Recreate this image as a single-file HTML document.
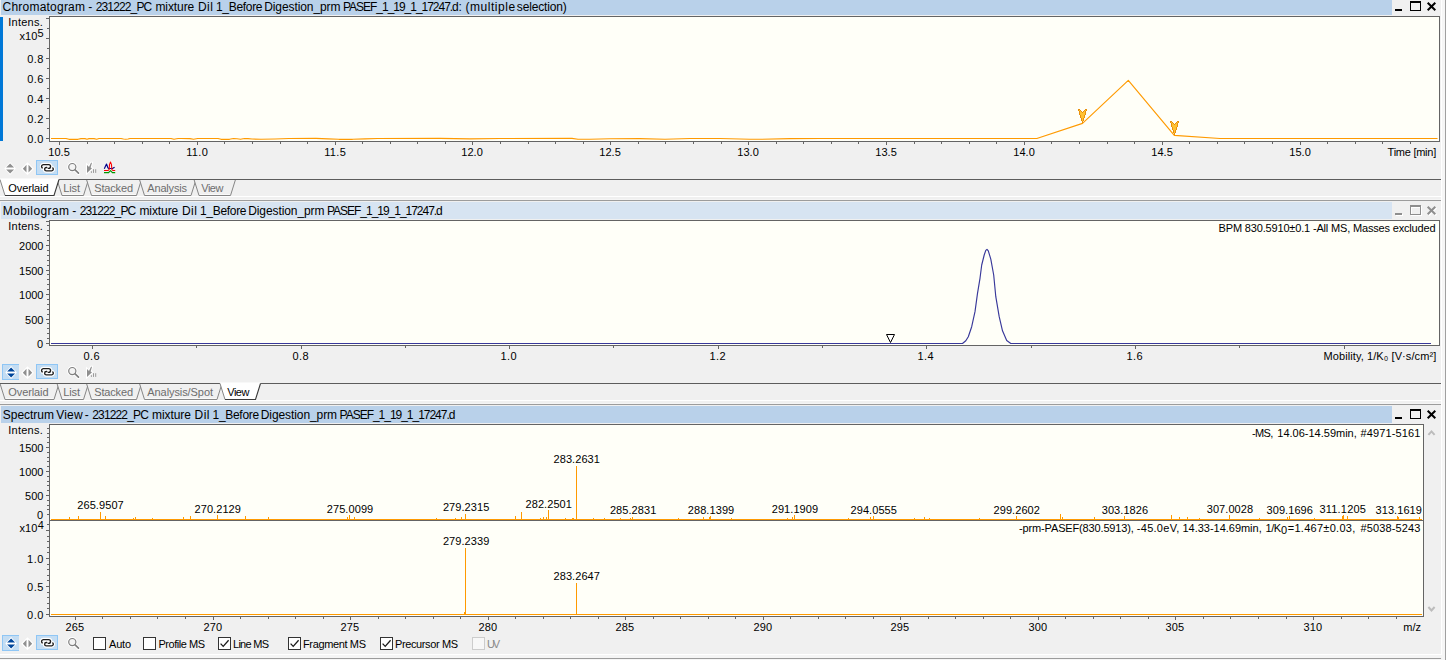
<!DOCTYPE html>
<html lang="en"><head><meta charset="utf-8"><title>Data Analysis</title>
<style>html,body{margin:0;padding:0;background:#f0f0f0;overflow:hidden}svg{display:block}text{white-space:pre}</style>
</head><body>
<svg width="1446" height="660" viewBox="0 0 1446 660" font-family="Liberation Sans, sans-serif" font-size="11" fill="#000">
<rect x="0" y="0" width="1446" height="660" fill="#f0f0f0"/>
<g shape-rendering="crispEdges">
<rect x="1441" y="0" width="1" height="655" fill="#ffffff"/>
<rect x="1442" y="0" width="3" height="660" fill="#f6f6f6"/>
<rect x="1445" y="0" width="1" height="660" fill="#a0a0a0"/>
</g>
<g shape-rendering="crispEdges">
<rect x="1" y="0" width="1391" height="15" fill="#b9d1ea"/>
</g>
<g shape-rendering="crispEdges">
<rect x="1395" y="9" width="7" height="2" fill="#000"/>
<rect x="1410" y="1" width="11" height="2" fill="#000"/>
<rect x="1410" y="1" width="1" height="10" fill="#000"/>
<rect x="1420" y="1" width="1" height="10" fill="#000"/>
<rect x="1410" y="10" width="11" height="1" fill="#000"/>
</g>
<path d="M1427.7 2.7 L1435.3 10.3 M1435.3 2.7 L1427.7 10.3" stroke="#000" stroke-width="2" fill="none"/>
<text y="11" font-size="12"><tspan x="2.6" textLength="82.4" lengthAdjust="spacing">Chromatogram</tspan> <tspan x="88.2" textLength="5.0" lengthAdjust="spacing">-</tspan> <tspan x="95.7" textLength="56.5" lengthAdjust="spacing">231222_PC</tspan> <tspan x="155.4" textLength="38.9" lengthAdjust="spacing">mixture</tspan> <tspan x="198.0" textLength="14.8" lengthAdjust="spacing">Dil</tspan> <tspan x="216.0" textLength="46.5" lengthAdjust="spacing">1_Before</tspan> <tspan x="264.2" textLength="76.3" lengthAdjust="spacing">Digestion_prm</tspan> <tspan x="343.0" textLength="115.8" lengthAdjust="spacing">PASEF_1_19_1_17247.d</tspan> <tspan x="458.5" textLength="3.3" lengthAdjust="spacing">:</tspan> <tspan x="465.4" textLength="49.7" lengthAdjust="spacing">(multiple</tspan> <tspan x="516.8" textLength="50.0" lengthAdjust="spacing">selection)</tspan></text>
<g shape-rendering="crispEdges">
<rect x="0" y="17" width="3" height="124" fill="#0078d7"/>
<rect x="49" y="16" width="1391" height="126" fill="#646464"/>
<rect x="50" y="17" width="1389" height="124" fill="#fffff8"/>
<rect x="46" y="138" width="3" height="1" fill="#646464"/>
<rect x="47" y="128" width="2" height="1" fill="#646464"/>
<rect x="46" y="118" width="3" height="1" fill="#646464"/>
<rect x="47" y="108" width="2" height="1" fill="#646464"/>
<rect x="46" y="98" width="3" height="1" fill="#646464"/>
<rect x="47" y="88" width="2" height="1" fill="#646464"/>
<rect x="46" y="78" width="3" height="1" fill="#646464"/>
<rect x="47" y="68" width="2" height="1" fill="#646464"/>
<rect x="46" y="58" width="3" height="1" fill="#646464"/>
<rect x="47" y="48" width="2" height="1" fill="#646464"/>
<rect x="46" y="38" width="3" height="1" fill="#646464"/>
<rect x="47" y="28" width="2" height="1" fill="#646464"/>
<rect x="46" y="18" width="3" height="1" fill="#646464"/>
<rect x="59" y="142" width="1" height="3" fill="#646464"/>
<rect x="87" y="142" width="1" height="2" fill="#646464"/>
<rect x="114" y="142" width="1" height="2" fill="#646464"/>
<rect x="142" y="142" width="1" height="2" fill="#646464"/>
<rect x="169" y="142" width="1" height="2" fill="#646464"/>
<rect x="197" y="142" width="1" height="3" fill="#646464"/>
<rect x="224" y="142" width="1" height="2" fill="#646464"/>
<rect x="252" y="142" width="1" height="2" fill="#646464"/>
<rect x="280" y="142" width="1" height="2" fill="#646464"/>
<rect x="307" y="142" width="1" height="2" fill="#646464"/>
<rect x="335" y="142" width="1" height="3" fill="#646464"/>
<rect x="362" y="142" width="1" height="2" fill="#646464"/>
<rect x="390" y="142" width="1" height="2" fill="#646464"/>
<rect x="417" y="142" width="1" height="2" fill="#646464"/>
<rect x="445" y="142" width="1" height="2" fill="#646464"/>
<rect x="472" y="142" width="1" height="3" fill="#646464"/>
<rect x="500" y="142" width="1" height="2" fill="#646464"/>
<rect x="528" y="142" width="1" height="2" fill="#646464"/>
<rect x="555" y="142" width="1" height="2" fill="#646464"/>
<rect x="583" y="142" width="1" height="2" fill="#646464"/>
<rect x="610" y="142" width="1" height="3" fill="#646464"/>
<rect x="638" y="142" width="1" height="2" fill="#646464"/>
<rect x="665" y="142" width="1" height="2" fill="#646464"/>
<rect x="693" y="142" width="1" height="2" fill="#646464"/>
<rect x="721" y="142" width="1" height="2" fill="#646464"/>
<rect x="748" y="142" width="1" height="3" fill="#646464"/>
<rect x="776" y="142" width="1" height="2" fill="#646464"/>
<rect x="803" y="142" width="1" height="2" fill="#646464"/>
<rect x="831" y="142" width="1" height="2" fill="#646464"/>
<rect x="858" y="142" width="1" height="2" fill="#646464"/>
<rect x="886" y="142" width="1" height="3" fill="#646464"/>
<rect x="914" y="142" width="1" height="2" fill="#646464"/>
<rect x="941" y="142" width="1" height="2" fill="#646464"/>
<rect x="969" y="142" width="1" height="2" fill="#646464"/>
<rect x="996" y="142" width="1" height="2" fill="#646464"/>
<rect x="1024" y="142" width="1" height="3" fill="#646464"/>
<rect x="1051" y="142" width="1" height="2" fill="#646464"/>
<rect x="1079" y="142" width="1" height="2" fill="#646464"/>
<rect x="1107" y="142" width="1" height="2" fill="#646464"/>
<rect x="1134" y="142" width="1" height="2" fill="#646464"/>
<rect x="1162" y="142" width="1" height="3" fill="#646464"/>
<rect x="1189" y="142" width="1" height="2" fill="#646464"/>
<rect x="1217" y="142" width="1" height="2" fill="#646464"/>
<rect x="1244" y="142" width="1" height="2" fill="#646464"/>
<rect x="1272" y="142" width="1" height="2" fill="#646464"/>
<rect x="1300" y="142" width="1" height="3" fill="#646464"/>
<rect x="1327" y="142" width="1" height="2" fill="#646464"/>
<rect x="1355" y="142" width="1" height="2" fill="#646464"/>
<rect x="1382" y="142" width="1" height="2" fill="#646464"/>
<rect x="1410" y="142" width="1" height="2" fill="#646464"/>
</g>
<text x="8.2" y="26" textLength="34.6" lengthAdjust="spacing">Intens.</text>
<text x="19.5" y="40" textLength="17.9" lengthAdjust="spacing">x10</text>
<text x="37.6" y="37" textLength="6.4" lengthAdjust="spacing">5</text>
<text x="27.2" y="143" textLength="16.2" lengthAdjust="spacing">0.0</text>
<text x="27.2" y="123" textLength="16.2" lengthAdjust="spacing">0.2</text>
<text x="27.2" y="103" textLength="16.2" lengthAdjust="spacing">0.4</text>
<text x="27.2" y="83" textLength="16.2" lengthAdjust="spacing">0.6</text>
<text x="27.2" y="63" textLength="16.2" lengthAdjust="spacing">0.8</text>
<text x="48.2" y="156" textLength="21.6" lengthAdjust="spacing">10.5</text>
<text x="186.2" y="156" textLength="21.6" lengthAdjust="spacing">11.0</text>
<text x="324.2" y="156" textLength="21.6" lengthAdjust="spacing">11.5</text>
<text x="461.2" y="156" textLength="21.6" lengthAdjust="spacing">12.0</text>
<text x="599.2" y="156" textLength="21.6" lengthAdjust="spacing">12.5</text>
<text x="737.2" y="156" textLength="21.6" lengthAdjust="spacing">13.0</text>
<text x="875.2" y="156" textLength="21.6" lengthAdjust="spacing">13.5</text>
<text x="1013.2" y="156" textLength="21.6" lengthAdjust="spacing">14.0</text>
<text x="1151.2" y="156" textLength="21.6" lengthAdjust="spacing">14.5</text>
<text x="1289.2" y="156" textLength="21.6" lengthAdjust="spacing">15.0</text>
<text x="1387.6" y="156" textLength="48.6" lengthAdjust="spacing">Time [min]</text>
<polyline fill="none" stroke="#ff9a00" stroke-width="1.15" stroke-linejoin="round" points="51,138.5 66,138.5 69,139.3 78,139.3 81,138.6 83,138.5 85,138.6 87,139.2 89,138.6 91,138.5 94,138.6 96.7,139.2 99,138.5 121,138.5 123.5,139 125.8,139.3 128,139 130,138.5 171,138.5 174,139.3 176.5,138.8 178.3,138.5 181,138.5 190,138.6 193.5,139.3 197.7,138.5 218,138.5 221,139.3 229.5,139.3 232,138.7 233.6,138.5 237,138.7 240.6,139.3 243,138.7 244.7,138.5 248,138.6 252,139 261,139.3 275,139 289,138.5 316,138.4 328,138.9 338.8,139.3 352.6,139.3 365,138.9 377.5,138.5 440,138.4 470,138.9 500,138.5 572,138.4 578,139.3 590,139.2 610,138.7 640,138.6 665,139.2 690,138.5 720,138.5 750,139.2 762,139.3 790,138.6 820,138.5 1036.8,138.5 1082.5,123.4 1128.3,80.4 1174.3,135.4 1220,138.5 1437.5,138.5"/>
<g shape-rendering="crispEdges">
<rect x="1078" y="109" width="2" height="1" fill="#e8900f"/>
<rect x="1085" y="109" width="2" height="1" fill="#e8900f"/>
<rect x="1078" y="110" width="1" height="1" fill="#e8900f"/>
<rect x="1079" y="110" width="1" height="1" fill="#ffc233"/>
<rect x="1080" y="110" width="1" height="1" fill="#e8900f"/>
<rect x="1084" y="110" width="1" height="1" fill="#e8900f"/>
<rect x="1085" y="110" width="1" height="1" fill="#ffc233"/>
<rect x="1086" y="110" width="1" height="1" fill="#e8900f"/>
<rect x="1079" y="111" width="1" height="1" fill="#e8900f"/>
<rect x="1080" y="111" width="1" height="1" fill="#ffc233"/>
<rect x="1081" y="111" width="1" height="1" fill="#e8900f"/>
<rect x="1083" y="111" width="1" height="1" fill="#e8900f"/>
<rect x="1084" y="111" width="1" height="1" fill="#ffc233"/>
<rect x="1085" y="111" width="1" height="1" fill="#e8900f"/>
<rect x="1079" y="112" width="1" height="1" fill="#e8900f"/>
<rect x="1080" y="112" width="2" height="1" fill="#ffc233"/>
<rect x="1082" y="112" width="1" height="1" fill="#e8900f"/>
<rect x="1083" y="112" width="2" height="1" fill="#ffc233"/>
<rect x="1085" y="112" width="1" height="1" fill="#e8900f"/>
<rect x="1079" y="113" width="1" height="1" fill="#e8900f"/>
<rect x="1080" y="113" width="5" height="1" fill="#ffc233"/>
<rect x="1085" y="113" width="1" height="1" fill="#e8900f"/>
<rect x="1079" y="114" width="1" height="1" fill="#e8900f"/>
<rect x="1080" y="114" width="5" height="1" fill="#ffc233"/>
<rect x="1085" y="114" width="1" height="1" fill="#e8900f"/>
<rect x="1080" y="115" width="1" height="1" fill="#e8900f"/>
<rect x="1081" y="115" width="3" height="1" fill="#ffc233"/>
<rect x="1084" y="115" width="1" height="1" fill="#e8900f"/>
<rect x="1080" y="116" width="1" height="1" fill="#e8900f"/>
<rect x="1081" y="116" width="3" height="1" fill="#ffc233"/>
<rect x="1084" y="116" width="1" height="1" fill="#e8900f"/>
<rect x="1080" y="117" width="1" height="1" fill="#e8900f"/>
<rect x="1081" y="117" width="3" height="1" fill="#ffc233"/>
<rect x="1084" y="117" width="1" height="1" fill="#e8900f"/>
<rect x="1081" y="118" width="1" height="1" fill="#e8900f"/>
<rect x="1082" y="118" width="1" height="1" fill="#ffc233"/>
<rect x="1083" y="118" width="1" height="1" fill="#e8900f"/>
<rect x="1081" y="119" width="1" height="1" fill="#e8900f"/>
<rect x="1082" y="119" width="1" height="1" fill="#ffc233"/>
<rect x="1083" y="119" width="1" height="1" fill="#e8900f"/>
<rect x="1081" y="120" width="1" height="1" fill="#e8900f"/>
<rect x="1082" y="120" width="1" height="1" fill="#ffc233"/>
<rect x="1083" y="120" width="1" height="1" fill="#e8900f"/>
<rect x="1082" y="121" width="1" height="1" fill="#e8900f"/>
<rect x="1082" y="122" width="1" height="1" fill="#e8900f"/>
</g>
<g shape-rendering="crispEdges">
<rect x="1170" y="121" width="2" height="1" fill="#e8900f"/>
<rect x="1177" y="121" width="2" height="1" fill="#e8900f"/>
<rect x="1170" y="122" width="1" height="1" fill="#e8900f"/>
<rect x="1171" y="122" width="1" height="1" fill="#ffc233"/>
<rect x="1172" y="122" width="1" height="1" fill="#e8900f"/>
<rect x="1176" y="122" width="1" height="1" fill="#e8900f"/>
<rect x="1177" y="122" width="1" height="1" fill="#ffc233"/>
<rect x="1178" y="122" width="1" height="1" fill="#e8900f"/>
<rect x="1171" y="123" width="1" height="1" fill="#e8900f"/>
<rect x="1172" y="123" width="1" height="1" fill="#ffc233"/>
<rect x="1173" y="123" width="1" height="1" fill="#e8900f"/>
<rect x="1175" y="123" width="1" height="1" fill="#e8900f"/>
<rect x="1176" y="123" width="1" height="1" fill="#ffc233"/>
<rect x="1177" y="123" width="1" height="1" fill="#e8900f"/>
<rect x="1171" y="124" width="1" height="1" fill="#e8900f"/>
<rect x="1172" y="124" width="2" height="1" fill="#ffc233"/>
<rect x="1174" y="124" width="1" height="1" fill="#e8900f"/>
<rect x="1175" y="124" width="2" height="1" fill="#ffc233"/>
<rect x="1177" y="124" width="1" height="1" fill="#e8900f"/>
<rect x="1171" y="125" width="1" height="1" fill="#e8900f"/>
<rect x="1172" y="125" width="5" height="1" fill="#ffc233"/>
<rect x="1177" y="125" width="1" height="1" fill="#e8900f"/>
<rect x="1171" y="126" width="1" height="1" fill="#e8900f"/>
<rect x="1172" y="126" width="5" height="1" fill="#ffc233"/>
<rect x="1177" y="126" width="1" height="1" fill="#e8900f"/>
<rect x="1172" y="127" width="1" height="1" fill="#e8900f"/>
<rect x="1173" y="127" width="3" height="1" fill="#ffc233"/>
<rect x="1176" y="127" width="1" height="1" fill="#e8900f"/>
<rect x="1172" y="128" width="1" height="1" fill="#e8900f"/>
<rect x="1173" y="128" width="3" height="1" fill="#ffc233"/>
<rect x="1176" y="128" width="1" height="1" fill="#e8900f"/>
<rect x="1172" y="129" width="1" height="1" fill="#e8900f"/>
<rect x="1173" y="129" width="3" height="1" fill="#ffc233"/>
<rect x="1176" y="129" width="1" height="1" fill="#e8900f"/>
<rect x="1173" y="130" width="1" height="1" fill="#e8900f"/>
<rect x="1174" y="130" width="1" height="1" fill="#ffc233"/>
<rect x="1175" y="130" width="1" height="1" fill="#e8900f"/>
<rect x="1173" y="131" width="1" height="1" fill="#e8900f"/>
<rect x="1174" y="131" width="1" height="1" fill="#ffc233"/>
<rect x="1175" y="131" width="1" height="1" fill="#e8900f"/>
<rect x="1173" y="132" width="1" height="1" fill="#e8900f"/>
<rect x="1174" y="132" width="1" height="1" fill="#ffc233"/>
<rect x="1175" y="132" width="1" height="1" fill="#e8900f"/>
<rect x="1174" y="133" width="1" height="1" fill="#e8900f"/>
<rect x="1174" y="134" width="1" height="1" fill="#e8900f"/>
</g>
<path d="M10.1 161.9 L15.899999999999999 168.5 L10.1 175.1 L4.3 168.5 Z" fill="#fff"/>
<path d="M10.1 163.6 L14.1 167.6 L6.1 167.6 Z M6.1 169.4 L14.1 169.4 L10.1 173.4 Z" fill="#909090"/>
<path d="M27.5 162.29999999999998 L33.9 168.7 L27.5 175.1 L21.1 168.7 Z" fill="#fff"/>
<path d="M22.8 168.7 L26.5 164.79999999999998 L26.5 172.6 Z M28.5 164.79999999999998 L32.2 168.7 L28.5 172.6 Z" fill="#909090"/>
<g shape-rendering="crispEdges">
<rect x="36" y="160" width="22" height="15" fill="#8fc6f5"/>
<rect x="37" y="161" width="20" height="13" fill="#c4ddf3"/>
</g>
<g fill="none" stroke-linecap="round"><path d="M42.2 167.9 A1.85 1.85 0 0 1 43.6 164.65 L48.7 164.65 A1.85 1.85 0 0 1 48.7 168.35 L48.2 168.35" stroke="#fff" stroke-width="3.6"/><path d="M46.8 167.55 L46.3 167.55 A1.65 1.65 0 0 0 46.3 170.85 L51.6 170.85 A1.65 1.65 0 0 0 52.8 168.0" stroke="#fff" stroke-width="3.6"/><path d="M42.2 167.9 A1.85 1.85 0 0 1 43.6 164.65 L48.7 164.65 A1.85 1.85 0 0 1 48.7 168.35 L48.2 168.35" stroke="#1e1e1e" stroke-width="1.4"/><path d="M46.8 167.55 L46.3 167.55 A1.65 1.65 0 0 0 46.3 170.85 L51.6 170.85 A1.65 1.65 0 0 0 52.8 168.0" stroke="#1e1e1e" stroke-width="1.4"/></g>
<g fill="none" stroke-linecap="round"><circle cx="72.3" cy="167.1" r="3.6" stroke="#fff" stroke-width="3" /><path d="M75.1 169.9 L78.5 173.2" stroke="#fff" stroke-width="3.4"/><circle cx="72.3" cy="167.1" r="3.6" stroke="#808080" stroke-width="1.2" fill="#f4f4f4"/><path d="M75.1 169.9 L78.5 173.2" stroke="#808080" stroke-width="1.7"/></g>
<path d="M87 165 L87 173 L92 168.2 L90.6 167.4 L92 162.8 L91 162.8 L89 167 Z" fill="#fff" stroke="#fff" stroke-width="2"/>
<path d="M87 165 L87 173 L92 168.2 L90.6 167.4 L92 162.8 L91 162.8 L89 167 Z" fill="#8e8e8e"/>
<g fill="#9a9a9a"><rect x="90.9" y="171.2" width="1" height="1.7"/><rect x="93" y="169.2" width="1" height="3.7"/><rect x="95.2" y="169.2" width="1" height="3.7"/></g>
<g fill="none" stroke-linejoin="round"><path d="M104.3 168.7 L106.5 164 L107.9 167.8 L108.8 168.5 L112.4 168.5 L114.6 167.2" stroke="#00008c" stroke-width="1.15"/><path d="M104 170.5 L108.2 170.5 L109.2 169.4 L109.5 164.6 L110.5 162 L111.5 164.6 L111.8 169.4 L112.8 170.5 L115.2 170.5" stroke="#ff0000" stroke-width="1.05"/><path d="M104 172.6 L108.6 172.6 L110.5 170.7 L112.4 172.6 L115.2 172.6" stroke="#009600" stroke-width="1.15"/></g>
<path d="M57.0 179.5 L62.0 195.5 L83.5 195.5 L88.5 179.5" fill="#f0f0f0" stroke="#868686" stroke-width="1"/>
<path d="M62.9 194.5 L82.8 194.5" fill="none" stroke="#fafafa" stroke-width="1"/>
<text x="63.2" y="192" fill="#6d6d6d" textLength="16.8" lengthAdjust="spacing">List</text>
<path d="M86.5 179.5 L91.5 195.5 L136.5 195.5 L141.5 179.5" fill="#f0f0f0" stroke="#868686" stroke-width="1"/>
<path d="M92.4 194.5 L135.8 194.5" fill="none" stroke="#fafafa" stroke-width="1"/>
<text x="94.2" y="192" fill="#6d6d6d" textLength="38.8" lengthAdjust="spacing">Stacked</text>
<path d="M139.5 179.5 L144.5 195.5 L191.0 195.5 L196.0 179.5" fill="#f0f0f0" stroke="#868686" stroke-width="1"/>
<path d="M145.4 194.5 L190.3 194.5" fill="none" stroke="#fafafa" stroke-width="1"/>
<text x="147.3" y="192" fill="#6d6d6d" textLength="39.7" lengthAdjust="spacing">Analysis</text>
<path d="M194.0 179.5 L199.0 195.5 L230.5 195.5 L235.5 179.5" fill="#f0f0f0" stroke="#868686" stroke-width="1"/>
<path d="M199.9 194.5 L229.8 194.5" fill="none" stroke="#fafafa" stroke-width="1"/>
<text x="201.3" y="192" fill="#6d6d6d" textLength="22.1" lengthAdjust="spacing">View</text>
<g shape-rendering="crispEdges">
<rect x="0" y="179" width="1441" height="1" fill="#5c5c5c"/>
</g>
<path d="M-0.2999999999999998 178.5 L5.0 195.5 L54.0 195.5 L59.3 178.5 Z" fill="#fff" stroke="none"/>
<path d="M0.0 179.5 L5.0 195.5" fill="none" stroke="#868686" stroke-width="1"/>
<path d="M5.0 195.5 L54.0 195.5 L59.0 179.5" fill="none" stroke="#3a3a3a" stroke-width="1.1"/>
<text x="8.3" y="192" textLength="40.2" lengthAdjust="spacing">Overlaid</text>
<g shape-rendering="crispEdges">
<rect x="0" y="196" width="1441" height="1" fill="#fff"/>
<rect x="0" y="199" width="1441" height="1" fill="#f5f5f5"/>
<rect x="0" y="200" width="1441" height="1" fill="#9c9c9c"/>
</g>
<g shape-rendering="crispEdges">
<rect x="1" y="202" width="1391" height="17" fill="#d7e4f2"/>
</g>
<g shape-rendering="crispEdges">
<rect x="1396" y="214" width="7" height="2" fill="#ffffff"/>
<rect x="1411" y="206" width="11" height="2" fill="#ffffff"/>
<rect x="1411" y="206" width="1" height="10" fill="#ffffff"/>
<rect x="1421" y="206" width="1" height="10" fill="#ffffff"/>
<rect x="1411" y="215" width="11" height="1" fill="#ffffff"/>
</g>
<path d="M1428.7 207.7 L1436.3 215.3 M1436.3 207.7 L1428.7 215.3" stroke="#ffffff" stroke-width="2" fill="none"/>
<g shape-rendering="crispEdges">
<rect x="1395" y="213" width="7" height="2" fill="#8e8e8e"/>
<rect x="1410" y="205" width="11" height="2" fill="#8e8e8e"/>
<rect x="1410" y="205" width="1" height="10" fill="#8e8e8e"/>
<rect x="1420" y="205" width="1" height="10" fill="#8e8e8e"/>
<rect x="1410" y="214" width="11" height="1" fill="#8e8e8e"/>
</g>
<path d="M1427.7 206.7 L1435.3 214.3 M1435.3 206.7 L1427.7 214.3" stroke="#8e8e8e" stroke-width="2" fill="none"/>
<text y="215" font-size="12"><tspan x="2.8" textLength="66.2" lengthAdjust="spacing">Mobilogram</tspan> <tspan x="72.2" textLength="5.0" lengthAdjust="spacing">-</tspan> <tspan x="79.7" textLength="56.5" lengthAdjust="spacing">231222_PC</tspan> <tspan x="139.4" textLength="38.9" lengthAdjust="spacing">mixture</tspan> <tspan x="182.0" textLength="14.8" lengthAdjust="spacing">Dil</tspan> <tspan x="200.0" textLength="46.5" lengthAdjust="spacing">1_Before</tspan> <tspan x="248.2" textLength="76.3" lengthAdjust="spacing">Digestion_prm</tspan> <tspan x="327.0" textLength="115.8" lengthAdjust="spacing">PASEF_1_19_1_17247.d</tspan></text>
<g shape-rendering="crispEdges">
<rect x="49" y="220" width="1391" height="126" fill="#646464"/>
<rect x="50" y="221" width="1389" height="124" fill="#fffff8"/>
<rect x="46" y="343" width="3" height="1" fill="#646464"/>
<rect x="47" y="338" width="2" height="1" fill="#646464"/>
<rect x="47" y="333" width="2" height="1" fill="#646464"/>
<rect x="47" y="328" width="2" height="1" fill="#646464"/>
<rect x="47" y="323" width="2" height="1" fill="#646464"/>
<rect x="46" y="319" width="3" height="1" fill="#646464"/>
<rect x="47" y="314" width="2" height="1" fill="#646464"/>
<rect x="47" y="309" width="2" height="1" fill="#646464"/>
<rect x="47" y="304" width="2" height="1" fill="#646464"/>
<rect x="47" y="299" width="2" height="1" fill="#646464"/>
<rect x="46" y="294" width="3" height="1" fill="#646464"/>
<rect x="47" y="289" width="2" height="1" fill="#646464"/>
<rect x="47" y="284" width="2" height="1" fill="#646464"/>
<rect x="47" y="279" width="2" height="1" fill="#646464"/>
<rect x="47" y="274" width="2" height="1" fill="#646464"/>
<rect x="46" y="270" width="3" height="1" fill="#646464"/>
<rect x="47" y="265" width="2" height="1" fill="#646464"/>
<rect x="47" y="260" width="2" height="1" fill="#646464"/>
<rect x="47" y="255" width="2" height="1" fill="#646464"/>
<rect x="47" y="250" width="2" height="1" fill="#646464"/>
<rect x="46" y="245" width="3" height="1" fill="#646464"/>
<rect x="47" y="240" width="2" height="1" fill="#646464"/>
<rect x="47" y="235" width="2" height="1" fill="#646464"/>
<rect x="47" y="230" width="2" height="1" fill="#646464"/>
<rect x="47" y="225" width="2" height="1" fill="#646464"/>
<rect x="46" y="221" width="3" height="1" fill="#646464"/>
<rect x="92" y="346" width="1" height="3" fill="#646464"/>
<rect x="196" y="346" width="1" height="2" fill="#646464"/>
<rect x="301" y="346" width="1" height="3" fill="#646464"/>
<rect x="405" y="346" width="1" height="2" fill="#646464"/>
<rect x="509" y="346" width="1" height="3" fill="#646464"/>
<rect x="613" y="346" width="1" height="2" fill="#646464"/>
<rect x="718" y="346" width="1" height="3" fill="#646464"/>
<rect x="822" y="346" width="1" height="2" fill="#646464"/>
<rect x="926" y="346" width="1" height="3" fill="#646464"/>
<rect x="1031" y="346" width="1" height="2" fill="#646464"/>
<rect x="1135" y="346" width="1" height="3" fill="#646464"/>
<rect x="1239" y="346" width="1" height="2" fill="#646464"/>
<rect x="1344" y="346" width="1" height="3" fill="#646464"/>
</g>
<text x="8.2" y="230" textLength="34.6" lengthAdjust="spacing">Intens.</text>
<text x="19.1" y="250" textLength="24.2" lengthAdjust="spacing">2000</text>
<text x="19.1" y="275" textLength="24.2" lengthAdjust="spacing">1500</text>
<text x="19.1" y="299" textLength="24.2" lengthAdjust="spacing">1000</text>
<text x="25.1" y="324" textLength="18.2" lengthAdjust="spacing">500</text>
<text x="37.1" y="348" textLength="6.2" lengthAdjust="spacing">0</text>
<text x="83.4" y="360" textLength="16.2" lengthAdjust="spacing">0.6</text>
<text x="292.4" y="360" textLength="16.2" lengthAdjust="spacing">0.8</text>
<text x="500.4" y="360" textLength="16.2" lengthAdjust="spacing">1.0</text>
<text x="709.4" y="360" textLength="16.2" lengthAdjust="spacing">1.2</text>
<text x="917.4" y="360" textLength="16.2" lengthAdjust="spacing">1.4</text>
<text x="1126.4" y="360" textLength="16.2" lengthAdjust="spacing">1.6</text>
<text x="1323.6" y="360" textLength="112.6" lengthAdjust="spacing">Mobility, 1/K₀ [V·s/cm²]</text>
<text x="1218.6" y="232" textLength="217.0" lengthAdjust="spacing">BPM 830.5910±0.1 -All MS, Masses excluded</text>
<polyline fill="none" stroke="#38389a" stroke-width="1.15" stroke-linejoin="round" points="51,343.5 962.5,343.5 965.8,340.8 968.3,336.7 971.7,326.7 975,311.7 977.5,293.3 980,278.3 981.7,265 984.2,255 985.8,250.4 987,249.3 988.3,250.8 990.8,259.2 993.7,275 995.8,296.7 999.2,316.7 1002.5,330.8 1006.7,340.5 1010.8,343.5 1431,343.5"/>
<path d="M886.5 334.5 L894.5 334.5 L890.5 342.5 Z" fill="#fff" stroke="#000" stroke-width="1"/>
<g shape-rendering="crispEdges">
<rect x="2" y="364" width="17" height="16" fill="#8fc6f5"/>
<rect x="3" y="365" width="16" height="14" fill="#c4ddf3"/>
</g>
<path d="M11.1 365.9 L16.9 372.5 L11.1 379.1 L5.3 372.5 Z" fill="#fff"/>
<path d="M11.1 367.6 L15.1 371.6 L7.1 371.6 Z M7.1 373.4 L15.1 373.4 L11.1 377.4 Z" fill="#00469b"/>
<path d="M27.5 366.3 L33.9 372.7 L27.5 379.09999999999997 L21.1 372.7 Z" fill="#fff"/>
<path d="M22.8 372.7 L26.5 368.8 L26.5 376.59999999999997 Z M28.5 368.8 L32.2 372.7 L28.5 376.59999999999997 Z" fill="#909090"/>
<g shape-rendering="crispEdges">
<rect x="36" y="364" width="22" height="15" fill="#8fc6f5"/>
<rect x="37" y="365" width="20" height="13" fill="#c4ddf3"/>
</g>
<g fill="none" stroke-linecap="round"><path d="M42.2 371.9 A1.85 1.85 0 0 1 43.6 368.65 L48.7 368.65 A1.85 1.85 0 0 1 48.7 372.35 L48.2 372.35" stroke="#fff" stroke-width="3.6"/><path d="M46.8 371.55 L46.3 371.55 A1.65 1.65 0 0 0 46.3 374.85 L51.6 374.85 A1.65 1.65 0 0 0 52.8 372.0" stroke="#fff" stroke-width="3.6"/><path d="M42.2 371.9 A1.85 1.85 0 0 1 43.6 368.65 L48.7 368.65 A1.85 1.85 0 0 1 48.7 372.35 L48.2 372.35" stroke="#1e1e1e" stroke-width="1.4"/><path d="M46.8 371.55 L46.3 371.55 A1.65 1.65 0 0 0 46.3 374.85 L51.6 374.85 A1.65 1.65 0 0 0 52.8 372.0" stroke="#1e1e1e" stroke-width="1.4"/></g>
<g fill="none" stroke-linecap="round"><circle cx="72.3" cy="371.1" r="3.6" stroke="#fff" stroke-width="3" /><path d="M75.1 373.90000000000003 L78.5 377.20000000000005" stroke="#fff" stroke-width="3.4"/><circle cx="72.3" cy="371.1" r="3.6" stroke="#808080" stroke-width="1.2" fill="#f4f4f4"/><path d="M75.1 373.90000000000003 L78.5 377.20000000000005" stroke="#808080" stroke-width="1.7"/></g>
<path d="M87 369 L87 377 L92 372.2 L90.6 371.4 L92 366.8 L91 366.8 L89 371 Z" fill="#fff" stroke="#fff" stroke-width="2"/>
<path d="M87 369 L87 377 L92 372.2 L90.6 371.4 L92 366.8 L91 366.8 L89 371 Z" fill="#8e8e8e"/>
<g fill="#9a9a9a"><rect x="90.9" y="375.2" width="1" height="1.7"/><rect x="93" y="373.2" width="1" height="3.7"/><rect x="95.2" y="373.2" width="1" height="3.7"/></g>
<path d="M0.0 383.5 L5.0 399.5 L54.0 399.5 L59.0 383.5" fill="#f0f0f0" stroke="#868686" stroke-width="1"/>
<path d="M5.9 398.5 L53.3 398.5" fill="none" stroke="#fafafa" stroke-width="1"/>
<text x="8.3" y="396" fill="#6d6d6d" textLength="40.2" lengthAdjust="spacing">Overlaid</text>
<path d="M57.0 383.5 L62.0 399.5 L83.5 399.5 L88.5 383.5" fill="#f0f0f0" stroke="#868686" stroke-width="1"/>
<path d="M62.9 398.5 L82.8 398.5" fill="none" stroke="#fafafa" stroke-width="1"/>
<text x="63.2" y="396" fill="#6d6d6d" textLength="16.8" lengthAdjust="spacing">List</text>
<path d="M86.5 383.5 L91.5 399.5 L136.5 399.5 L141.5 383.5" fill="#f0f0f0" stroke="#868686" stroke-width="1"/>
<path d="M92.4 398.5 L135.8 398.5" fill="none" stroke="#fafafa" stroke-width="1"/>
<text x="94.2" y="396" fill="#6d6d6d" textLength="38.8" lengthAdjust="spacing">Stacked</text>
<path d="M139.5 383.5 L144.5 399.5 L217.0 399.5 L222.0 383.5" fill="#f0f0f0" stroke="#868686" stroke-width="1"/>
<path d="M145.4 398.5 L216.3 398.5" fill="none" stroke="#fafafa" stroke-width="1"/>
<text x="147.3" y="396" fill="#6d6d6d" textLength="65.7" lengthAdjust="spacing">Analysis/Spot</text>
<g shape-rendering="crispEdges">
<rect x="0" y="383" width="1441" height="1" fill="#5c5c5c"/>
</g>
<path d="M219.7 382.5 L225.0 399.5 L255.5 399.5 L260.8 382.5 Z" fill="#fff" stroke="none"/>
<path d="M220.0 383.5 L225.0 399.5" fill="none" stroke="#868686" stroke-width="1"/>
<path d="M225.0 399.5 L255.5 399.5 L260.5 383.5" fill="none" stroke="#3a3a3a" stroke-width="1.1"/>
<text x="227.3" y="396" textLength="22.1" lengthAdjust="spacing">View</text>
<g shape-rendering="crispEdges">
<rect x="0" y="400" width="1441" height="1" fill="#fff"/>
<rect x="0" y="403" width="1441" height="1" fill="#f5f5f5"/>
<rect x="0" y="404" width="1441" height="1" fill="#9c9c9c"/>
</g>
<g shape-rendering="crispEdges">
<rect x="1" y="406" width="1391" height="17" fill="#b9d1ea"/>
</g>
<g shape-rendering="crispEdges">
<rect x="1395" y="417" width="7" height="2" fill="#000"/>
<rect x="1410" y="409" width="11" height="2" fill="#000"/>
<rect x="1410" y="409" width="1" height="10" fill="#000"/>
<rect x="1420" y="409" width="1" height="10" fill="#000"/>
<rect x="1410" y="418" width="11" height="1" fill="#000"/>
</g>
<path d="M1427.7 410.7 L1435.3 418.3 M1435.3 410.7 L1427.7 418.3" stroke="#000" stroke-width="2" fill="none"/>
<text y="419" font-size="12"><tspan x="2.8" textLength="51.1" lengthAdjust="spacing">Spectrum</tspan> <tspan x="56.2" textLength="26.4" lengthAdjust="spacing">View</tspan> <tspan x="84.8" textLength="5.0" lengthAdjust="spacing">-</tspan> <tspan x="92.3" textLength="56.5" lengthAdjust="spacing">231222_PC</tspan> <tspan x="152.0" textLength="38.9" lengthAdjust="spacing">mixture</tspan> <tspan x="194.6" textLength="14.8" lengthAdjust="spacing">Dil</tspan> <tspan x="212.6" textLength="46.5" lengthAdjust="spacing">1_Before</tspan> <tspan x="260.8" textLength="76.3" lengthAdjust="spacing">Digestion_prm</tspan> <tspan x="339.6" textLength="115.8" lengthAdjust="spacing">PASEF_1_19_1_17247.d</tspan></text>
<g shape-rendering="crispEdges">
<rect x="49" y="424" width="1375" height="193" fill="#646464"/>
<rect x="50" y="425" width="1373" height="191" fill="#fffff8"/>
<rect x="1424" y="424" width="17" height="193" fill="#f0f0f0"/>
<rect x="50" y="520" width="1373" height="1" fill="#646464"/>
<rect x="47" y="514" width="2" height="1" fill="#646464"/>
<rect x="47" y="509" width="2" height="1" fill="#646464"/>
<rect x="47" y="505" width="2" height="1" fill="#646464"/>
<rect x="47" y="500" width="2" height="1" fill="#646464"/>
<rect x="46" y="495" width="3" height="1" fill="#646464"/>
<rect x="47" y="490" width="2" height="1" fill="#646464"/>
<rect x="47" y="485" width="2" height="1" fill="#646464"/>
<rect x="47" y="481" width="2" height="1" fill="#646464"/>
<rect x="47" y="476" width="2" height="1" fill="#646464"/>
<rect x="46" y="471" width="3" height="1" fill="#646464"/>
<rect x="47" y="466" width="2" height="1" fill="#646464"/>
<rect x="47" y="461" width="2" height="1" fill="#646464"/>
<rect x="47" y="457" width="2" height="1" fill="#646464"/>
<rect x="47" y="452" width="2" height="1" fill="#646464"/>
<rect x="46" y="447" width="3" height="1" fill="#646464"/>
<rect x="47" y="442" width="2" height="1" fill="#646464"/>
<rect x="47" y="437" width="2" height="1" fill="#646464"/>
<rect x="47" y="433" width="2" height="1" fill="#646464"/>
<rect x="47" y="428" width="2" height="1" fill="#646464"/>
<rect x="46" y="614" width="3" height="1" fill="#646464"/>
<rect x="47" y="608" width="2" height="1" fill="#646464"/>
<rect x="47" y="603" width="2" height="1" fill="#646464"/>
<rect x="47" y="597" width="2" height="1" fill="#646464"/>
<rect x="47" y="592" width="2" height="1" fill="#646464"/>
<rect x="46" y="586" width="3" height="1" fill="#646464"/>
<rect x="47" y="580" width="2" height="1" fill="#646464"/>
<rect x="47" y="575" width="2" height="1" fill="#646464"/>
<rect x="47" y="569" width="2" height="1" fill="#646464"/>
<rect x="47" y="564" width="2" height="1" fill="#646464"/>
<rect x="46" y="558" width="3" height="1" fill="#646464"/>
<rect x="47" y="552" width="2" height="1" fill="#646464"/>
<rect x="47" y="547" width="2" height="1" fill="#646464"/>
<rect x="47" y="541" width="2" height="1" fill="#646464"/>
<rect x="47" y="536" width="2" height="1" fill="#646464"/>
<rect x="46" y="530" width="3" height="1" fill="#646464"/>
<rect x="47" y="524" width="2" height="1" fill="#646464"/>
<rect x="75" y="617" width="1" height="3" fill="#646464"/>
<rect x="102" y="617" width="1" height="2" fill="#646464"/>
<rect x="130" y="617" width="1" height="2" fill="#646464"/>
<rect x="157" y="617" width="1" height="2" fill="#646464"/>
<rect x="185" y="617" width="1" height="2" fill="#646464"/>
<rect x="213" y="617" width="1" height="3" fill="#646464"/>
<rect x="240" y="617" width="1" height="2" fill="#646464"/>
<rect x="268" y="617" width="1" height="2" fill="#646464"/>
<rect x="295" y="617" width="1" height="2" fill="#646464"/>
<rect x="323" y="617" width="1" height="2" fill="#646464"/>
<rect x="350" y="617" width="1" height="3" fill="#646464"/>
<rect x="378" y="617" width="1" height="2" fill="#646464"/>
<rect x="405" y="617" width="1" height="2" fill="#646464"/>
<rect x="433" y="617" width="1" height="2" fill="#646464"/>
<rect x="460" y="617" width="1" height="2" fill="#646464"/>
<rect x="488" y="617" width="1" height="3" fill="#646464"/>
<rect x="515" y="617" width="1" height="2" fill="#646464"/>
<rect x="543" y="617" width="1" height="2" fill="#646464"/>
<rect x="570" y="617" width="1" height="2" fill="#646464"/>
<rect x="598" y="617" width="1" height="2" fill="#646464"/>
<rect x="625" y="617" width="1" height="3" fill="#646464"/>
<rect x="653" y="617" width="1" height="2" fill="#646464"/>
<rect x="680" y="617" width="1" height="2" fill="#646464"/>
<rect x="708" y="617" width="1" height="2" fill="#646464"/>
<rect x="735" y="617" width="1" height="2" fill="#646464"/>
<rect x="763" y="617" width="1" height="3" fill="#646464"/>
<rect x="790" y="617" width="1" height="2" fill="#646464"/>
<rect x="818" y="617" width="1" height="2" fill="#646464"/>
<rect x="845" y="617" width="1" height="2" fill="#646464"/>
<rect x="873" y="617" width="1" height="2" fill="#646464"/>
<rect x="900" y="617" width="1" height="3" fill="#646464"/>
<rect x="928" y="617" width="1" height="2" fill="#646464"/>
<rect x="955" y="617" width="1" height="2" fill="#646464"/>
<rect x="983" y="617" width="1" height="2" fill="#646464"/>
<rect x="1010" y="617" width="1" height="2" fill="#646464"/>
<rect x="1038" y="617" width="1" height="3" fill="#646464"/>
<rect x="1065" y="617" width="1" height="2" fill="#646464"/>
<rect x="1093" y="617" width="1" height="2" fill="#646464"/>
<rect x="1120" y="617" width="1" height="2" fill="#646464"/>
<rect x="1148" y="617" width="1" height="2" fill="#646464"/>
<rect x="1175" y="617" width="1" height="3" fill="#646464"/>
<rect x="1203" y="617" width="1" height="2" fill="#646464"/>
<rect x="1230" y="617" width="1" height="2" fill="#646464"/>
<rect x="1258" y="617" width="1" height="2" fill="#646464"/>
<rect x="1286" y="617" width="1" height="2" fill="#646464"/>
<rect x="1313" y="617" width="1" height="3" fill="#646464"/>
<rect x="1341" y="617" width="1" height="2" fill="#646464"/>
<rect x="1368" y="617" width="1" height="2" fill="#646464"/>
<rect x="1396" y="617" width="1" height="2" fill="#646464"/>
<rect x="51" y="519" width="1371" height="1" fill="#ff9a00"/>
<rect x="51" y="614" width="1371" height="1" fill="#ff9a00"/>
<rect x="69" y="517" width="1" height="2" fill="#ff9a00"/>
<rect x="78" y="516" width="1" height="3" fill="#ff9a00"/>
<rect x="100" y="512" width="1" height="7" fill="#ff9a00"/>
<rect x="105" y="516" width="1" height="3" fill="#ff9a00"/>
<rect x="133" y="518" width="1" height="1" fill="#ff9a00"/>
<rect x="135" y="517" width="1" height="2" fill="#ff9a00"/>
<rect x="152" y="518" width="1" height="1" fill="#ff9a00"/>
<rect x="183" y="517" width="1" height="2" fill="#ff9a00"/>
<rect x="190" y="516" width="1" height="3" fill="#ff9a00"/>
<rect x="217" y="515" width="1" height="4" fill="#ff9a00"/>
<rect x="245" y="516" width="1" height="3" fill="#ff9a00"/>
<rect x="268" y="517" width="1" height="2" fill="#ff9a00"/>
<rect x="347" y="517" width="1" height="2" fill="#ff9a00"/>
<rect x="349" y="515" width="1" height="4" fill="#ff9a00"/>
<rect x="354" y="517" width="1" height="2" fill="#ff9a00"/>
<rect x="436" y="518" width="1" height="1" fill="#ff9a00"/>
<rect x="455" y="518" width="1" height="1" fill="#ff9a00"/>
<rect x="461" y="517" width="1" height="2" fill="#ff9a00"/>
<rect x="465" y="514" width="1" height="5" fill="#ff9a00"/>
<rect x="515" y="516" width="1" height="3" fill="#ff9a00"/>
<rect x="521" y="512" width="1" height="7" fill="#ff9a00"/>
<rect x="540" y="518" width="1" height="1" fill="#ff9a00"/>
<rect x="543" y="517" width="1" height="2" fill="#ff9a00"/>
<rect x="546" y="517" width="1" height="2" fill="#ff9a00"/>
<rect x="548" y="510" width="1" height="9" fill="#ff9a00"/>
<rect x="565" y="518" width="1" height="1" fill="#ff9a00"/>
<rect x="572" y="518" width="1" height="1" fill="#ff9a00"/>
<rect x="573" y="518" width="1" height="1" fill="#ff9a00"/>
<rect x="576" y="466" width="1" height="53" fill="#ff9a00"/>
<rect x="593" y="518" width="1" height="1" fill="#ff9a00"/>
<rect x="604" y="518" width="1" height="1" fill="#ff9a00"/>
<rect x="620" y="518" width="1" height="1" fill="#ff9a00"/>
<rect x="630" y="518" width="1" height="1" fill="#ff9a00"/>
<rect x="632" y="517" width="1" height="2" fill="#ff9a00"/>
<rect x="678" y="518" width="1" height="1" fill="#ff9a00"/>
<rect x="703" y="517" width="1" height="2" fill="#ff9a00"/>
<rect x="709" y="517" width="1" height="2" fill="#ff9a00"/>
<rect x="710" y="516" width="1" height="3" fill="#ff9a00"/>
<rect x="731" y="518" width="1" height="1" fill="#ff9a00"/>
<rect x="787" y="518" width="1" height="1" fill="#ff9a00"/>
<rect x="792" y="517" width="1" height="2" fill="#ff9a00"/>
<rect x="794" y="515" width="1" height="4" fill="#ff9a00"/>
<rect x="848" y="518" width="1" height="1" fill="#ff9a00"/>
<rect x="870" y="517" width="1" height="2" fill="#ff9a00"/>
<rect x="873" y="516" width="1" height="3" fill="#ff9a00"/>
<rect x="914" y="518" width="1" height="1" fill="#ff9a00"/>
<rect x="924" y="517" width="1" height="2" fill="#ff9a00"/>
<rect x="929" y="518" width="1" height="1" fill="#ff9a00"/>
<rect x="979" y="518" width="1" height="1" fill="#ff9a00"/>
<rect x="1016" y="516" width="1" height="3" fill="#ff9a00"/>
<rect x="1060" y="514" width="1" height="5" fill="#ff9a00"/>
<rect x="1062" y="517" width="1" height="2" fill="#ff9a00"/>
<rect x="1094" y="517" width="1" height="2" fill="#ff9a00"/>
<rect x="1124" y="516" width="1" height="3" fill="#ff9a00"/>
<rect x="1171" y="515" width="1" height="4" fill="#ff9a00"/>
<rect x="1179" y="517" width="1" height="2" fill="#ff9a00"/>
<rect x="1187" y="517" width="1" height="2" fill="#ff9a00"/>
<rect x="1199" y="518" width="1" height="1" fill="#ff9a00"/>
<rect x="1229" y="515" width="1" height="4" fill="#ff9a00"/>
<rect x="1259" y="518" width="1" height="1" fill="#ff9a00"/>
<rect x="1287" y="517" width="1" height="2" fill="#ff9a00"/>
<rect x="1289" y="516" width="1" height="3" fill="#ff9a00"/>
<rect x="1314" y="518" width="1" height="1" fill="#ff9a00"/>
<rect x="1342" y="516" width="1" height="3" fill="#ff9a00"/>
<rect x="1343" y="515" width="1" height="4" fill="#ff9a00"/>
<rect x="1347" y="516" width="1" height="3" fill="#ff9a00"/>
<rect x="1397" y="516" width="1" height="3" fill="#ff9a00"/>
<rect x="1398" y="517" width="1" height="2" fill="#ff9a00"/>
<rect x="1419" y="517" width="1" height="2" fill="#ff9a00"/>
<rect x="465" y="548" width="1" height="66" fill="#ff9a00"/>
<rect x="464" y="612" width="1" height="2" fill="#ff9a00"/>
<rect x="576" y="583" width="1" height="31" fill="#ff9a00"/>
</g>
<text x="8.2" y="434" textLength="34.6" lengthAdjust="spacing">Intens.</text>
<text x="19.1" y="452" textLength="24.2" lengthAdjust="spacing">1500</text>
<text x="19.1" y="476" textLength="24.2" lengthAdjust="spacing">1000</text>
<text x="25.1" y="500" textLength="18.2" lengthAdjust="spacing">500</text>
<text x="37.1" y="519" textLength="6.2" lengthAdjust="spacing">0</text>
<text x="19.5" y="532" textLength="17.9" lengthAdjust="spacing">x10</text>
<text x="37.8" y="529" textLength="6.6" lengthAdjust="spacing">4</text>
<text x="27.1" y="563" textLength="16.2" lengthAdjust="spacing">1.0</text>
<text x="27.1" y="591" textLength="16.2" lengthAdjust="spacing">0.5</text>
<text x="27.1" y="619" textLength="16.2" lengthAdjust="spacing">0.0</text>
<text x="65.6" y="631" textLength="18.4" lengthAdjust="spacing">265</text>
<text x="203.6" y="631" textLength="18.4" lengthAdjust="spacing">270</text>
<text x="340.6" y="631" textLength="18.4" lengthAdjust="spacing">275</text>
<text x="478.6" y="631" textLength="18.4" lengthAdjust="spacing">280</text>
<text x="615.6" y="631" textLength="18.4" lengthAdjust="spacing">285</text>
<text x="753.6" y="631" textLength="18.4" lengthAdjust="spacing">290</text>
<text x="890.6" y="631" textLength="18.4" lengthAdjust="spacing">295</text>
<text x="1028.6" y="631" textLength="18.4" lengthAdjust="spacing">300</text>
<text x="1165.6" y="631" textLength="18.4" lengthAdjust="spacing">305</text>
<text x="1303.6" y="631" textLength="18.4" lengthAdjust="spacing">310</text>
<text x="1403.2" y="631" textLength="17.8" lengthAdjust="spacing">m/z</text>
<text x="77.3" y="509" textLength="46.4" lengthAdjust="spacing">265.9507</text>
<text x="194.5" y="513" textLength="46.4" lengthAdjust="spacing">270.2129</text>
<text x="326.8" y="513" textLength="46.4" lengthAdjust="spacing">275.0099</text>
<text x="442.9" y="511" textLength="46.4" lengthAdjust="spacing">279.2315</text>
<text x="525.5" y="507.5" textLength="46.4" lengthAdjust="spacing">282.2501</text>
<text x="553.5" y="463" textLength="46.4" lengthAdjust="spacing">283.2631</text>
<text x="609.9" y="514" textLength="46.4" lengthAdjust="spacing">285.2831</text>
<text x="687.8" y="514" textLength="46.4" lengthAdjust="spacing">288.1399</text>
<text x="771.7" y="513" textLength="46.4" lengthAdjust="spacing">291.1909</text>
<text x="850.5" y="514" textLength="46.4" lengthAdjust="spacing">294.0555</text>
<text x="993.5" y="514" textLength="46.4" lengthAdjust="spacing">299.2602</text>
<text x="1101.7" y="514" textLength="46.4" lengthAdjust="spacing">303.1826</text>
<text x="1206.7" y="513" textLength="46.4" lengthAdjust="spacing">307.0028</text>
<text x="1266.5" y="514" textLength="46.4" lengthAdjust="spacing">309.1696</text>
<text x="1319.5" y="513" textLength="46.4" lengthAdjust="spacing">311.1205</text>
<text x="1375.5" y="514" textLength="46.4" lengthAdjust="spacing">313.1619</text>
<text x="442.9" y="545" textLength="46.4" lengthAdjust="spacing">279.2339</text>
<text x="553.5" y="580" textLength="46.4" lengthAdjust="spacing">283.2647</text>
<text y="437"><tspan x="1252.0" textLength="21.3" lengthAdjust="spacing">-MS,</tspan> <tspan x="1277.3" textLength="79.5" lengthAdjust="spacing">14.06-14.59min,</tspan> <tspan x="1360.5" textLength="59.8" lengthAdjust="spacing">#4971-5161</tspan></text>
<text y="532"><tspan x="1019.1" textLength="114.7" lengthAdjust="spacing">-prm-PASEF(830.5913),</tspan> <tspan x="1136.8" textLength="42.5" lengthAdjust="spacing">-45.0eV,</tspan> <tspan x="1182.5" textLength="79.2" lengthAdjust="spacing">14.33-14.69min,</tspan> <tspan x="1265.5" textLength="15.6" lengthAdjust="spacing">1/K</tspan> <tspan x="1280.9" dy="2" textLength="6.0" lengthAdjust="spacing">0</tspan> <tspan x="1287.7" dy="-2" textLength="67.6" lengthAdjust="spacing">=1.467±0.03,</tspan> <tspan x="1360.5" textLength="59.8" lengthAdjust="spacing">#5038-5243</tspan></text>
<path d="M1428.4 434.8 L1431.5 431.4 L1434.6 434.8" fill="none" stroke="#bcbcbc" stroke-width="2"/>
<path d="M1428.4 607 L1431.5 610.4 L1434.6 607" fill="none" stroke="#bcbcbc" stroke-width="2"/>
<g shape-rendering="crispEdges">
<rect x="2" y="635" width="17" height="16" fill="#8fc6f5"/>
<rect x="3" y="636" width="16" height="14" fill="#c4ddf3"/>
</g>
<path d="M11.1 636.9 L16.9 643.5 L11.1 650.1 L5.3 643.5 Z" fill="#fff"/>
<path d="M11.1 638.6 L15.1 642.6 L7.1 642.6 Z M7.1 644.4 L15.1 644.4 L11.1 648.4 Z" fill="#00469b"/>
<path d="M27.5 637.3000000000001 L33.9 643.7 L27.5 650.1 L21.1 643.7 Z" fill="#fff"/>
<path d="M22.8 643.7 L26.5 639.8000000000001 L26.5 647.6 Z M28.5 639.8000000000001 L32.2 643.7 L28.5 647.6 Z" fill="#909090"/>
<g shape-rendering="crispEdges">
<rect x="36" y="635" width="22" height="15" fill="#8fc6f5"/>
<rect x="37" y="636" width="20" height="13" fill="#c4ddf3"/>
</g>
<g fill="none" stroke-linecap="round"><path d="M42.2 642.9 A1.85 1.85 0 0 1 43.6 639.65 L48.7 639.65 A1.85 1.85 0 0 1 48.7 643.35 L48.2 643.35" stroke="#fff" stroke-width="3.6"/><path d="M46.8 642.55 L46.3 642.55 A1.65 1.65 0 0 0 46.3 645.85 L51.6 645.85 A1.65 1.65 0 0 0 52.8 643.0" stroke="#fff" stroke-width="3.6"/><path d="M42.2 642.9 A1.85 1.85 0 0 1 43.6 639.65 L48.7 639.65 A1.85 1.85 0 0 1 48.7 643.35 L48.2 643.35" stroke="#1e1e1e" stroke-width="1.4"/><path d="M46.8 642.55 L46.3 642.55 A1.65 1.65 0 0 0 46.3 645.85 L51.6 645.85 A1.65 1.65 0 0 0 52.8 643.0" stroke="#1e1e1e" stroke-width="1.4"/></g>
<g fill="none" stroke-linecap="round"><circle cx="72.3" cy="642.1" r="3.6" stroke="#fff" stroke-width="3" /><path d="M75.1 644.9 L78.5 648.2" stroke="#fff" stroke-width="3.4"/><circle cx="72.3" cy="642.1" r="3.6" stroke="#808080" stroke-width="1.2" fill="#f4f4f4"/><path d="M75.1 644.9 L78.5 648.2" stroke="#808080" stroke-width="1.7"/></g>
<g shape-rendering="crispEdges">
<rect x="93" y="637" width="13" height="13" fill="#333"/>
<rect x="94" y="638" width="11" height="11" fill="#fff"/>
</g>
<text x="109" y="648" textLength="22" lengthAdjust="spacing">Auto</text>
<g shape-rendering="crispEdges">
<rect x="143" y="637" width="13" height="13" fill="#333"/>
<rect x="144" y="638" width="11" height="11" fill="#fff"/>
</g>
<text x="158.5" y="648" textLength="46.5" lengthAdjust="spacing">Profile MS</text>
<g shape-rendering="crispEdges">
<rect x="218" y="637" width="13" height="13" fill="#333"/>
<rect x="219" y="638" width="11" height="11" fill="#fff"/>
</g>
<path d="M220.6 643.6 L223.2 646.4 L228.6 640.2" fill="none" stroke="#1a1a1a" stroke-width="1.3"/>
<text x="233" y="648" textLength="36" lengthAdjust="spacing">Line MS</text>
<g shape-rendering="crispEdges">
<rect x="288" y="637" width="13" height="13" fill="#333"/>
<rect x="289" y="638" width="11" height="11" fill="#fff"/>
</g>
<path d="M290.6 643.6 L293.2 646.4 L298.6 640.2" fill="none" stroke="#1a1a1a" stroke-width="1.3"/>
<text x="303" y="648" textLength="63" lengthAdjust="spacing">Fragment MS</text>
<g shape-rendering="crispEdges">
<rect x="380" y="637" width="13" height="13" fill="#333"/>
<rect x="381" y="638" width="11" height="11" fill="#fff"/>
</g>
<path d="M382.6 643.6 L385.2 646.4 L390.6 640.2" fill="none" stroke="#1a1a1a" stroke-width="1.3"/>
<text x="395" y="648" textLength="63" lengthAdjust="spacing">Precursor MS</text>
<g shape-rendering="crispEdges">
<rect x="472" y="637" width="13" height="13" fill="#cccccc"/>
<rect x="473" y="638" width="11" height="11" fill="#f7f7f7"/>
</g>
<text x="487" y="648" fill="#8a8a8a" textLength="13" lengthAdjust="spacing">UV</text>
<g shape-rendering="crispEdges">
<rect x="0" y="654" width="1442" height="1" fill="#fff"/>
<rect x="0" y="655" width="1442" height="3" fill="#f5f5f5"/>
<rect x="0" y="658" width="1441" height="1" fill="#9c9c9c"/>
<rect x="0" y="659" width="1442" height="1" fill="#f6f6f6"/>
</g>
</svg>
</body></html>
